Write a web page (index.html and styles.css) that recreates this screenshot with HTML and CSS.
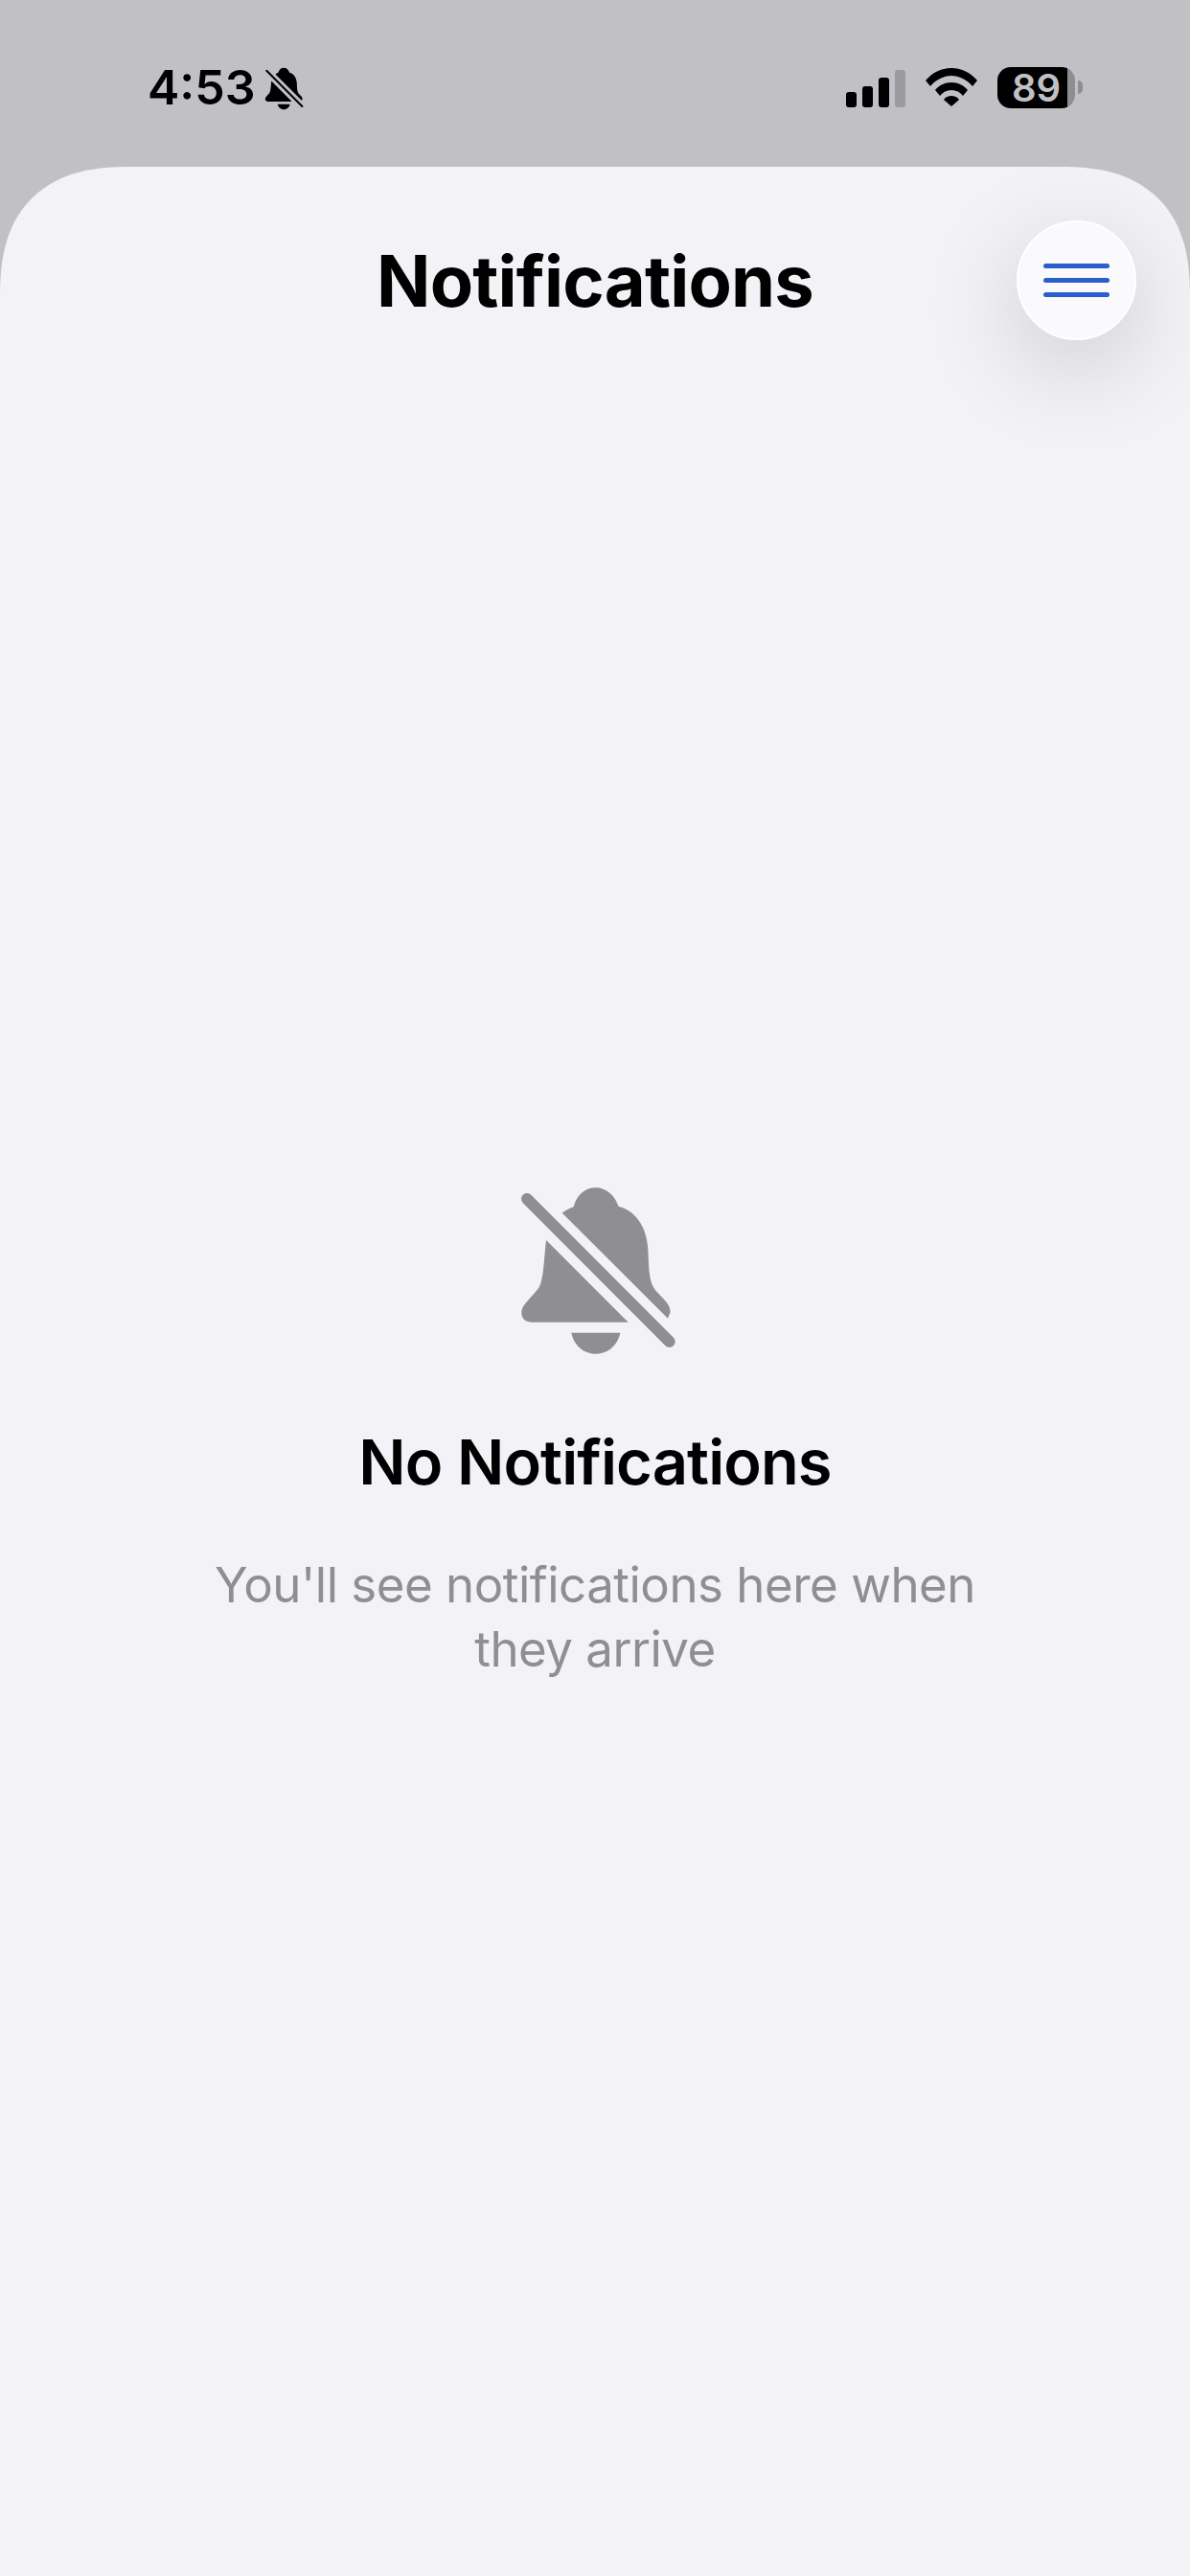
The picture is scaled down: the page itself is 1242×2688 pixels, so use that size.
FILE: index.html
```html
<!DOCTYPE html>
<html lang="en">
<head>
<meta charset="utf-8">
<title>Notifications</title>
<link rel="stylesheet" href="styles.css">
</head>
<body>
<div class="screen">
  <header class="status">
    <div class="status-left">
      <span class="time">4:53</span>
      <svg class="mute" viewBox="0 0 600 600" aria-hidden="true">
        <path d="M197 137C210 128 222 122 233 118C243 80 270 58 302 58C335 58 362 82 373 116C425 130 458 175 465 240C470 300 465 350 490 380C510 402 540 425 535 450L528 467Z"/>
        <path d="M147 222L404 479H100C80 479 68 465 70 445C72 425 105 398 125 370C140 340 140 280 147 222Z"/>
        <path d="M226 512H379C372 550 340 578 302 578C264 578 233 550 226 512Z"/>
        <path class="slash" d="M87 93L533 540"/>
      </svg>
    </div>
    <div class="status-right">
      <div class="signal">
        <span class="bar bar-1"></span>
        <span class="bar bar-2"></span>
        <span class="bar bar-3"></span>
        <span class="bar bar-4"></span>
      </div>
      <svg class="wifi" viewBox="0 0 54 40" aria-hidden="true">
        <path d="M0 13C7 5 16 0 27 0C38 0 47 5 54 13L49 19C43 12 35 8 27 8C19 8 11 12 5 19Z"/>
        <path d="M10 23C14 18 20 15 27 15C34 15 40 18 44 23L39 29C36 25 32 23 27 23C22 23 18 25 15 29Z"/>
        <path d="M19 33C21 30 24 29 27 29C30 29 33 30 35 33L27 40Z"/>
      </svg>
      <div class="battery"><span class="battery-level">89</span></div>
    </div>
  </header>
  <main class="sheet">
    <div class="sheet-head">
      <h1 class="title">Notifications</h1>
      <button class="menu" type="button" aria-label="Menu">
        <span class="menu-line"></span>
        <span class="menu-line"></span>
        <span class="menu-line"></span>
      </button>
    </div>
    <section class="empty">
      <svg class="empty-icon" viewBox="0 0 600 600" aria-hidden="true">
        <path d="M197 137C210 128 222 122 233 118C243 80 270 58 302 58C335 58 362 82 373 116C425 130 458 175 465 240C470 300 465 350 490 380C510 402 540 425 535 450L528 467Z"/>
        <path d="M147 222L404 479H100C80 479 68 465 70 445C72 425 105 398 125 370C140 340 140 280 147 222Z"/>
        <path d="M226 512H379C372 550 340 578 302 578C264 578 233 550 226 512Z"/>
        <path class="slash" d="M87 93L533 540"/>
      </svg>
      <h2 class="empty-title">No Notifications</h2>
      <p class="empty-text">You'll see notifications here when they arrive</p>
    </section>
  </main>
</div>
</body>
</html>
```
FILE: styles.css
```css
* { box-sizing: border-box; }
html, body { margin: 0; padding: 0; }
body {
  width: 1242px;
  height: 2688px;
  overflow: hidden;
  background: #c1c0c5;
  font-family: Inter, "Liberation Sans", sans-serif;
  color: #000;
}
.screen { display: flex; flex-direction: column; height: 2688px; }

.status {
  flex: 0 0 174px;
  display: flex;
  justify-content: space-between;
  align-items: flex-start;
  padding: 66px 120px 0 154px;
}
.status-left { display: flex; align-items: center; height: 50px; gap: 4px; }
.time { font-size: 50px; font-weight: 600; line-height: 50px; letter-spacing: 0; }
.mute { width: 50px; height: 50px; fill: #000; stroke: none; }
.mute .slash { fill: none; stroke: #000; stroke-width: 24; stroke-linecap: round; }

.status-right { display: flex; align-items: center; height: 50px; padding-top: 0; }
.signal { display: flex; align-items: flex-end; gap: 6px; height: 39px; margin-right: 21px; margin-top: 3px; }
.bar { width: 11px; border-radius: 3px; background: #000; }
.bar-1 { height: 16px; }
.bar-2 { height: 22px; }
.bar-3 { height: 31px; }
.bar-4 { height: 39px; background: #9b9a9e; }
.wifi { width: 54px; height: 40px; fill: #000; margin-right: 21px; }
.battery {
  position: relative;
  width: 81px;
  height: 43px;
  border-radius: 14px;
  background: linear-gradient(90deg, #000 0, #000 73px, #8e8d91 73px, #8e8d91 100%);
}
.battery::after {
  content: "";
  position: absolute;
  left: 84px;
  top: 14px;
  width: 5px;
  height: 14px;
  border-radius: 0 5px 5px 0;
  background: #8e8d91;
}
.battery-level {
  display: block;
  width: 81px;
  text-align: center;
  font-size: 40px;
  font-weight: 600;
  line-height: 43px;
  color: #c1c0c5;
}

.sheet {
  position: relative;
  flex: 1;
  overflow: hidden;
  background: #f2f2f7;
  border-radius: 135px 135px 0 0;
  corner-shape: superellipse(1.3);
}
.sheet-head { display: flex; justify-content: center; align-items: center; height: 238px; }
.title { margin: 0; font-size: 74px; font-weight: 700; line-height: 1; letter-spacing: -0.8px; }
.menu {
  position: absolute;
  top: 56px;
  right: 56px;
  display: flex;
  flex-direction: column;
  align-items: center;
  justify-content: center;
  gap: 10px;
  width: 125px;
  height: 125px;
  padding: 0;
  border: 2px solid #fff;
  border-radius: 50%;
  background: #fafafc;
  box-shadow: 0 28px 100px rgba(0, 0, 0, 0.17);
}
.menu-line { width: 69px; height: 5px; border-radius: 3px; background: #2a5fcc; }

.empty {
  display: flex;
  flex-direction: column;
  align-items: center;
  padding-top: 808px;
}
.empty-icon { width: 200px; height: 200px; fill: #8e8e93; }
.empty-icon .slash { fill: none; stroke: #8e8e93; stroke-width: 36; stroke-linecap: round; }
.empty-title { margin: 66px 0 0; font-size: 65px; font-weight: 600; line-height: 80px; letter-spacing: -0.9px; }
.empty-text {
  width: 820px;
  margin: 54px 0 0;
  font-size: 51px;
  font-weight: 400;
  line-height: 67px;
  letter-spacing: -0.5px;
  text-align: center;
  color: #8e8e93;
}
```
